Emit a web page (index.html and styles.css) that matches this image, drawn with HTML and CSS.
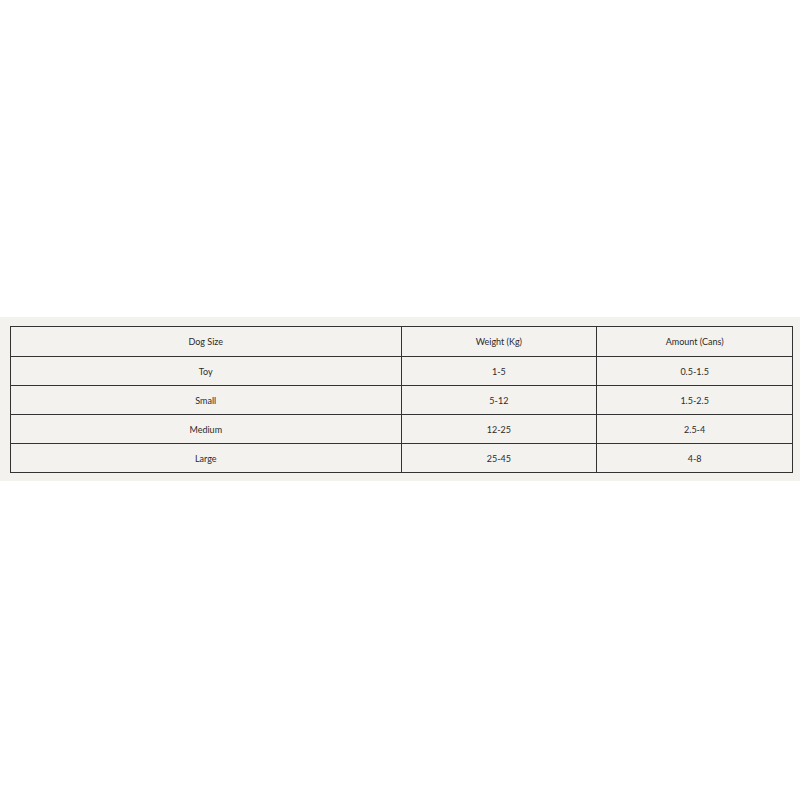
FILE: index.html
```html
<!DOCTYPE html>
<html lang="en">
<head>
<meta charset="utf-8">
<title>Dog feeding chart</title>
<link rel="stylesheet" href="styles.css">
</head>
<body>
<div class="page">
  <section class="band">
    <table class="chart">
      <thead>
        <tr><th class="c1">Dog Size</th><th class="c2">Weight (Kg)</th><th class="c3">Amount (Cans)</th></tr>
      </thead>
      <tbody>
        <tr><td>Toy</td><td>1-5</td><td>0.5-1.5</td></tr>
        <tr><td>Small</td><td>5-12</td><td>1.5-2.5</td></tr>
        <tr><td>Medium</td><td>12-25</td><td>2.5-4</td></tr>
        <tr><td>Large</td><td>25-45</td><td>4-8</td></tr>
      </tbody>
    </table>
  </section>
</div>
</body>
</html>
```
FILE: styles.css
```css
html, body {
  margin: 0;
  padding: 0;
  background: #ffffff;
}
.page {
  height: 800px;
  display: flex;
  flex-direction: column;
  justify-content: center;
  padding-bottom: 2px;
  box-sizing: border-box;
}
.band {
  background: #f3f2ee;
  padding: 9px 7px 8px 10px;
}
.chart {
  width: 100%;
  border-collapse: collapse;
  table-layout: fixed;
  font-family: Lato, "Open Sans", sans-serif;
  font-size: 9px;
  color: #2b2b2b;
}
.chart th,
.chart td {
  border: 1.5px solid #333333;
  text-align: center;
  font-weight: normal;
  padding: 0;
  height: 28px;
}
.chart thead th {
  height: 29px;
}
.c1 { width: 50%; }
.c2 { width: 25%; }
.c3 { width: 25%; }
```
